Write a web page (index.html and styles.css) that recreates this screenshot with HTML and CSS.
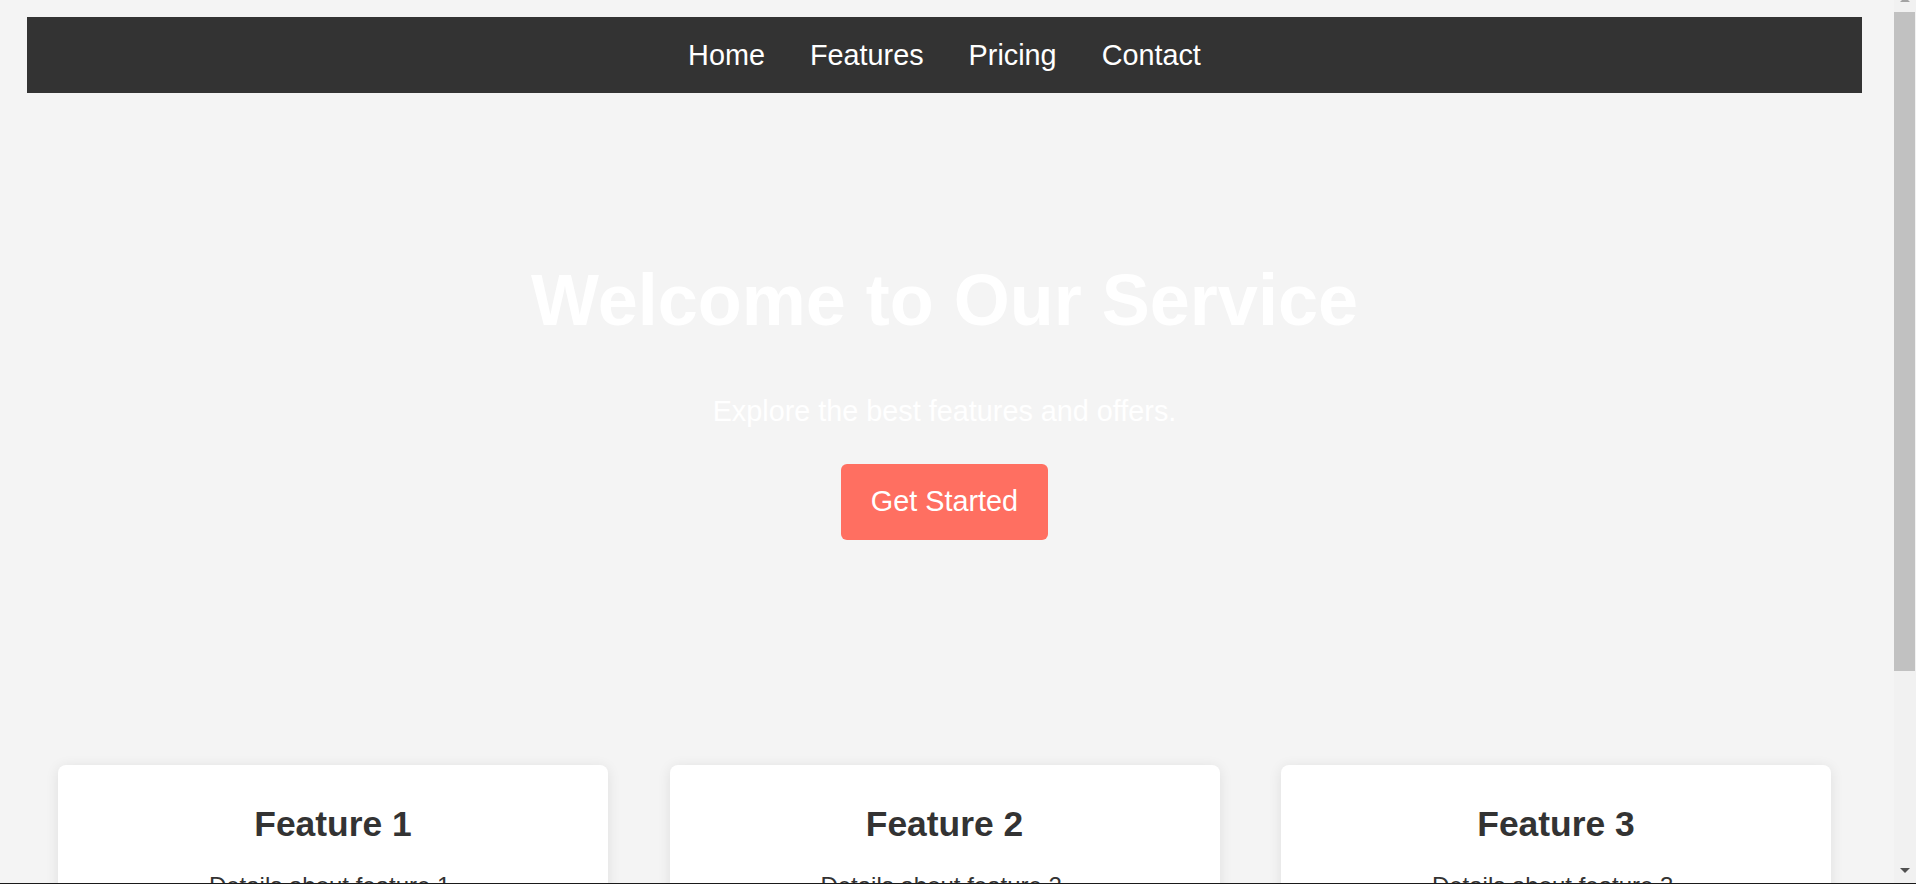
FILE: index.html
```html
<!DOCTYPE html>
<html lang="en">
<head>
<meta charset="utf-8">
<title>Our Service</title>
<link rel="stylesheet" href="styles.css">
</head>
<body>
<div class="page">
  <nav class="navbar">
    <a href="#" class="nav-link">Home</a>
    <a href="#" class="nav-link">Features</a>
    <a href="#" class="nav-link">Pricing</a>
    <a href="#" class="nav-link">Contact</a>
  </nav>
  <section class="hero">
    <h1 class="hero-title">Welcome to Our Service</h1>
    <p class="hero-sub">Explore the best features and offers.</p>
    <a href="#" class="hero-btn">Get Started</a>
  </section>
  <section class="features">
    <div class="card">
      <h2 class="card-title">Feature 1</h2>
      <p class="card-text">Details about feature 1.</p>
    </div>
    <div class="card">
      <h2 class="card-title">Feature 2</h2>
      <p class="card-text">Details about feature 2.</p>
    </div>
    <div class="card">
      <h2 class="card-title">Feature 3</h2>
      <p class="card-text">Details about feature 3.</p>
    </div>
  </section>
</div>
<div class="scrollbar">
  <span class="sb-up"></span>
  <span class="sb-thumb"></span>
  <span class="sb-down"></span>
</div>
<div class="frame-line"></div>
</body>
</html>
```

FILE: styles.css
```css
html {
  overflow: hidden;
}
body {
  margin: 0;
  background: #f4f4f4;
  font-family: "Liberation Sans", Arial, sans-serif;
  color: #333;
}
.page {
  box-sizing: border-box;
  width: 1894px;
  padding: 17px 32px 0 27px;
}
.navbar {
  background: #333;
  display: flex;
  justify-content: center;
  gap: 45px;
  padding: 21.5px 0;
}
.nav-link {
  color: #fff;
  text-decoration: none;
  font-size: 28.8px;
  line-height: normal;
}
.hero {
  display: flex;
  flex-direction: column;
  align-items: center;
  text-align: center;
  padding: 165.6px 0 224.5px;
}
.hero-title {
  margin: 0 0 54px;
  font-size: 72px;
  font-weight: bold;
  line-height: normal;
  color: #fff;
}
.hero-sub {
  margin: 0 0 36.2px;
  font-size: 28.8px;
  line-height: normal;
  color: #fff;
}
.hero-btn {
  display: block;
  background: #ff6f61;
  color: #fff;
  text-decoration: none;
  font-size: 28.8px;
  line-height: normal;
  padding: 21.7px 30px;
  border-radius: 6px;
}
.features {
  display: grid;
  grid-template-columns: repeat(3, 1fr);
  gap: 61.5px;
  padding: 0 31px 0 31px;
}
.card {
  background: #fff;
  border-radius: 8px;
  box-shadow: 0 2px 14px rgba(0, 0, 0, 0.09);
  padding: 39.5px 20px;
  text-align: center;
}
.card-title {
  margin: 0 0 27px;
  font-size: 35.4px;
  font-weight: bold;
  line-height: normal;
  color: #333;
}
.card-text {
  margin: 0;
  font-size: 24px;
  line-height: normal;
  color: #333;
}
.scrollbar {
  position: fixed;
  top: 0;
  right: 0;
  width: 22px;
  height: 100vh;
  background: #f1f1f1;
}
.sb-thumb {
  position: absolute;
  top: 12px;
  left: 0;
  width: 21px;
  height: 659px;
  background: #c1c1c1;
}
.sb-up {
  position: absolute;
  top: -3px;
  left: 6px;
  width: 0;
  height: 0;
  border-left: 5px solid transparent;
  border-right: 5px solid transparent;
  border-bottom: 5px solid #a3a3a3;
}
.sb-down {
  position: absolute;
  bottom: 11px;
  left: 6px;
  width: 0;
  height: 0;
  border-left: 5px solid transparent;
  border-right: 5px solid transparent;
  border-top: 5px solid #505050;
}
.frame-line {
  position: fixed;
  left: 0;
  right: 0;
  bottom: 0;
  height: 1px;
  background: #1a1a1a;
}
```
